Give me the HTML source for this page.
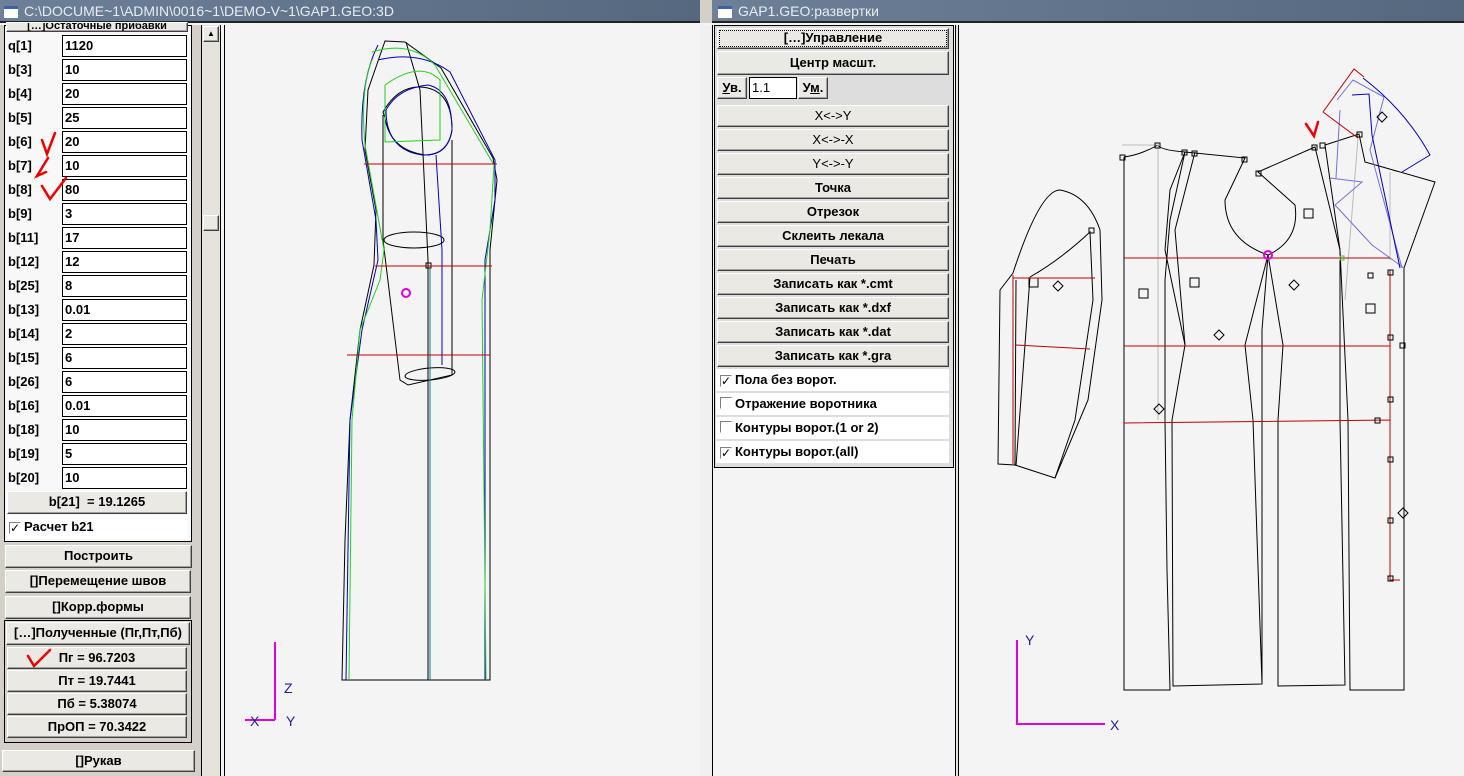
<!DOCTYPE html>
<html><head><meta charset="utf-8"><style>
*{margin:0;padding:0;box-sizing:border-box}
body{width:1464px;height:776px;overflow:hidden;background:#f4f4f4;position:relative;font-family:"Liberation Sans","DejaVu Sans",sans-serif;font-weight:bold;font-size:13px;color:#000}
.a{position:absolute}
.title{position:absolute;top:0;height:23px;background:linear-gradient(90deg,#6d8098,#56687e);color:#e8ecf2;font-weight:normal;font-size:14px;line-height:23px;border-bottom:2px solid #222}
.ico{position:absolute;top:6px;width:14px;height:12px;background:#fff;border-top:3px solid #3a63a8}
.btn{position:absolute;background:#ebe9e4;border:1px solid;border-color:#fff #404040 #404040 #fff;box-shadow:inset -1px -1px 0 #a0a0a0;text-align:center;line-height:20px;white-space:nowrap}
.in{position:absolute;left:62px;width:125px;height:22px;background:#fff;border:1px solid #000;line-height:20px;padding-left:2px}
.lb{position:absolute;left:8px;line-height:18px}
.cb{position:absolute;left:716px;width:233px;height:23px;background:#fff;border-bottom:1px solid #ddd;line-height:22px;padding-left:4px}
.box{display:inline-block;width:12px;height:12px;border:1px solid;border-color:#808080 #fff #fff #808080;vertical-align:-1px;margin-right:3px;font-size:12px;line-height:10px;text-align:center}
</style></head><body>
<div class="title" style="left:0;width:705px"><div class="ico" style="left:4px"></div><span style="position:absolute;left:24px">C:\DOCUME~1\ADMIN\0016~1\DEMO-V~1\GAP1.GEO:3D</span></div>
<div class="a" style="left:700px;top:0;width:12px;height:23px;background:#d4d0c8"></div>
<div class="title" style="left:712px;width:752px"><div class="ico" style="left:6px"></div><span style="position:absolute;left:26px">GAP1.GEO:развертки</span></div>

<div class="a" style="left:0;top:25px;width:201px;height:751px;background:#d4d0c8"></div>
<div class="a" style="left:4px;top:25px;width:188px;height:517px;border:1px solid #000;background:#f8f8f8"></div>
<div class="btn" style="left:6px;top:22px;width:182px;height:10px;line-height:6px;font-size:11px;overflow:hidden">[…]Остаточные прибавки</div>
<div class="lb" style="top:37px">q[1]</div><div class="in" style="top:35px">1120</div>
<div class="lb" style="top:61px">b[3]</div><div class="in" style="top:59px">10</div>
<div class="lb" style="top:85px">b[4]</div><div class="in" style="top:83px">20</div>
<div class="lb" style="top:109px">b[5]</div><div class="in" style="top:107px">25</div>
<div class="lb" style="top:133px">b[6]</div><div class="in" style="top:131px">20</div>
<div class="lb" style="top:157px">b[7]</div><div class="in" style="top:155px">10</div>
<div class="lb" style="top:181px">b[8]</div><div class="in" style="top:179px">80</div>
<div class="lb" style="top:205px">b[9]</div><div class="in" style="top:203px">3</div>
<div class="lb" style="top:229px">b[11]</div><div class="in" style="top:227px">17</div>
<div class="lb" style="top:253px">b[12]</div><div class="in" style="top:251px">12</div>
<div class="lb" style="top:277px">b[25]</div><div class="in" style="top:275px">8</div>
<div class="lb" style="top:301px">b[13]</div><div class="in" style="top:299px">0.01</div>
<div class="lb" style="top:325px">b[14]</div><div class="in" style="top:323px">2</div>
<div class="lb" style="top:349px">b[15]</div><div class="in" style="top:347px">6</div>
<div class="lb" style="top:373px">b[26]</div><div class="in" style="top:371px">6</div>
<div class="lb" style="top:397px">b[16]</div><div class="in" style="top:395px">0.01</div>
<div class="lb" style="top:421px">b[18]</div><div class="in" style="top:419px">10</div>
<div class="lb" style="top:445px">b[19]</div><div class="in" style="top:443px">5</div>
<div class="lb" style="top:469px">b[20]</div><div class="in" style="top:467px">10</div>
<div class="btn" style="left:7px;top:491px;width:180px;height:23px">b[21]&nbsp; = 19.1265</div>
<div class="a" style="left:7px;top:516px;width:180px;height:23px;background:#fff;line-height:22px;padding-left:2px"><span class="box">✓</span>Расчет b21</div>
<div class="btn" style="left:5px;top:545px;width:187px;height:23px">Построить</div>
<div class="btn" style="left:5px;top:570px;width:186px;height:23px">[]Перемещение швов</div>
<div class="btn" style="left:5px;top:596px;width:186px;height:23px">[]Корр.формы</div>
<div class="a" style="left:4px;top:620px;width:188px;height:123px;border:1px solid #000"></div>
<div class="btn" style="left:6px;top:622px;width:184px;height:23px">[…]Полученные (Пг,Пт,Пб)</div>
<div class="btn" style="left:7px;top:647px;width:180px;height:22px">Пг = 96.7203</div>
<div class="btn" style="left:7px;top:670px;width:180px;height:22px">Пт = 19.7441</div>
<div class="btn" style="left:7px;top:693px;width:180px;height:22px">Пб = 5.38074</div>
<div class="btn" style="left:7px;top:716px;width:180px;height:22px">ПрОП = 70.3422</div>
<div class="btn" style="left:2px;top:750px;width:193px;height:22px">[]Рукав</div>

<div class="a" style="left:201px;top:25px;width:1px;height:751px;background:#000"></div>
<div class="a" style="left:202px;top:25px;width:18px;height:751px;background:#e6e3dc"></div>
<div class="btn" style="left:203px;top:26px;width:16px;height:16px;line-height:14px;font-size:8px">▲</div>
<div class="btn" style="left:203px;top:215px;width:16px;height:16px"></div>
<div class="a" style="left:220px;top:25px;width:1px;height:751px;background:#000"></div>
<div class="a" style="left:224px;top:25px;width:1px;height:751px;background:#000"></div>

<div class="a" style="left:700px;top:25px;width:12px;height:751px;background:#f0f0f0"></div>
<div class="a" style="left:712px;top:25px;width:1px;height:751px;background:#000"></div>
<div class="a" style="left:955px;top:25px;width:4px;height:751px;background:#e6e3dc;border-left:1px solid #000;border-right:1px solid #000"></div>
<div class="a" style="left:714px;top:25px;width:240px;height:443px;border:1px solid #000;background:#ddd"></div>
<div class="btn" style="left:717px;top:28px;width:232px;height:21px;line-height:18px;outline:1px dotted #000;outline-offset:-3px">[…]Управление</div>
<div class="btn" style="left:717px;top:51px;width:232px;height:24px;line-height:22px">Центр масшт.</div>
<div class="btn" style="left:717px;top:77px;width:30px;height:22px"><u>У</u>в.</div>
<div class="a" style="left:749px;top:77px;width:48px;height:22px;background:#fff;border:1px solid #000;font-weight:normal;line-height:20px;padding-left:2px">1.1</div>
<div class="btn" style="left:798px;top:77px;width:30px;height:22px">У<u>м</u>.</div>
<div class="btn" style="left:717px;top:105px;width:232px;height:22px;font-weight:normal">X&lt;-&gt;Y</div>
<div class="btn" style="left:717px;top:129px;width:232px;height:22px;font-weight:normal">X&lt;-&gt;-X</div>
<div class="btn" style="left:717px;top:153px;width:232px;height:22px;font-weight:normal">Y&lt;-&gt;-Y</div>
<div class="btn" style="left:717px;top:177px;width:232px;height:22px">Точка</div>
<div class="btn" style="left:717px;top:201px;width:232px;height:22px">Отрезок</div>
<div class="btn" style="left:717px;top:225px;width:232px;height:22px">Склеить лекала</div>
<div class="btn" style="left:717px;top:249px;width:232px;height:22px">Печать</div>
<div class="btn" style="left:717px;top:273px;width:232px;height:22px">Записать как *.cmt</div>
<div class="btn" style="left:717px;top:297px;width:232px;height:22px">Записать как *.dxf</div>
<div class="btn" style="left:717px;top:321px;width:232px;height:22px">Записать как *.dat</div>
<div class="btn" style="left:717px;top:345px;width:232px;height:22px">Записать как *.gra</div>
<div class="cb" style="top:369px"><span class="box">✓</span>Пола без ворот.</div>
<div class="cb" style="top:393px"><span class="box"></span>Отражение воротника</div>
<div class="cb" style="top:417px"><span class="box"></span>Контуры ворот.(1 or 2)</div>
<div class="cb" style="top:441px"><span class="box">✓</span>Контуры ворот.(all)</div>

<svg class="a" style="left:0;top:0" width="1464" height="776" viewBox="0 0 1464 776" fill="none" stroke-width="1">
<g stroke="#e00" stroke-width="2.5" stroke-linecap="round">
<path d="M42 140 L47 154 L55 133"/><path d="M48 158 L37 176 L46 172"/><path d="M42 186 L50 199 L66 178"/>
<path d="M28 656 L34 666 L50 650"/><path d="M1306 124 L1314 136 L1318 122"/>
</g>
<g stroke="#000">
<path d="M385 41 L405 42 L441 68 L493 158 L497 180 L490 250 L490 680 L342 680 L345 540 L350 420 L360 330 L374 265 L376 210 L365 150 L368 90 Z"/>
<path d="M406 42 L420 90 L428 260 L428 680"/>
<path d="M383 112 Q400 82 428 88 Q452 94 452 130 Q448 155 425 155 Q390 150 385 118 Z"/>
<path d="M383 115 L383 240 L400 380 L408 385 L452 375 L452 140"/>
<ellipse cx="414" cy="240" rx="30" ry="8"/>
<ellipse cx="430" cy="374" rx="25" ry="6" transform="rotate(-5 430 374)"/>
<rect x="426" y="263" width="5" height="5"/>
</g>
<g stroke="#0000c0">
<path d="M378 45 Q360 80 362 140 L376 220 L378 260 L362 330 L350 420 L346 680"/>
<path d="M378 60 Q420 50 450 72 L495 160 L495 200 L485 260 L485 680"/>
<path d="M386 110 Q398 88 428 85 Q452 90 452 130 Q448 156 422 155 Q386 150 386 110"/>
<path d="M436 155 L442 250 L442 365"/>
</g>
<g stroke="#1fd21f">
<path d="M372 52 Q410 40 435 65 L494 165 L490 230 L482 300 L486 680"/>
<path d="M372 60 Q360 90 365 145 L384 250 L380 280 L360 330 L352 420 L349 680"/>
<path d="M385 85 Q420 60 440 80 L440 140 L385 142 Z"/>
</g>
<path d="M430 268 L430 680" stroke="#008080"/>
<g stroke="#c00000"><path d="M364 164 H497 M375 266 H492 M347 355 H490"/></g>
<circle cx="406" cy="293" r="4" stroke="#e000e0" stroke-width="2"/>
<g stroke="#e000e0" stroke-width="2"><path d="M275 642 V720 M245 720 H275"/></g>
<g fill="#2020a0" stroke="none" font-family="Liberation Sans" font-size="14" font-weight="normal"><text x="284" y="693">Z</text><text x="286" y="726">Y</text><text x="250" y="726">X</text><text x="1025" y="645">Y</text><text x="1110" y="730">X</text></g>
<g stroke="#e000e0" stroke-width="2"><path d="M1017 640 V724 H1105"/></g>

<g stroke="#000">
<path d="M1013 273 Q1040 190 1060 190 Q1088 195 1100 230 L1102 300 L1088 400 L1055 478 L1015 465 L998 464 L1000 290 Z"/>
<path d="M1030 277 Q1060 260 1090 232 L1093 300 L1075 420 L1055 478"/>
<path d="M1016 280 L1015 465 M1030 277 L1016 466"/>
<rect x="1029" y="278" width="9" height="9"/><rect x="1089" y="228" width="5" height="5"/>
</g>
<g stroke="#c00000"><path d="M1013 275 L1013 464 M1013 278 H1095 M1015 345 L1090 349"/></g>
<g stroke="#000">
<path d="M1124 157 L1124 690 L1170 690 L1167 570 L1165 420 L1165 280 L1170 220 L1185 152 Q1160 150 1158 145 Q1140 155 1124 157"/>
<path d="M1185 152 L1245 158 L1225 200 Q1225 240 1268 255 L1262 330 L1262 684 L1173 686 L1172 420 L1185 345 L1165 250 L1170 190 Z"/>
<path d="M1195 152 L1175 230 L1185 345"/>
<path d="M1258 172 L1315 147 L1340 250 L1340 420 L1345 685 L1278 686 L1278 420 L1283 345 L1268 255 Q1300 240 1295 205 Z"/>
<path d="M1325 145 L1359 134 L1365 162 L1435 182 L1404 268 L1404 690 L1350 690 L1348 420 L1340 250 Z"/>
<path d="M1268 255 L1245 345 L1253 420 L1262 684"/>
</g>
<g stroke="#bbb"><path d="M1122 145 H1158 L1158 420 M1358 138 L1345 300 M1390 172 V260"/></g>
<g stroke="#7070e0"><path d="M1337 100 L1353 80 L1384 97 L1370 150 L1402 268 M1330 178 L1362 182 L1335 205 L1372 245 L1404 268 M1340 110 L1336 178"/></g>
<g stroke="#0000c0"><path d="M1363 78 Q1405 110 1430 155 L1402 172 M1352 95 L1369 94 L1372 135 L1400 268"/></g>
<g stroke="#c00000"><path d="M1323 112 L1354 69 L1364 77 M1323 112 L1358 138 M1124 258 H1390 M1124 346 L1390 346 M1124 423 L1390 420 M1390 270 V580 H1400"/></g>
<circle cx="1268" cy="255" r="4" stroke="#e000e0" stroke-width="2"/>
<rect x="1340" y="256" width="4" height="4" stroke="#3c3"/>
<g stroke="#000">
<rect x="1120" y="155" width="5" height="5"/><rect x="1155" y="143" width="5" height="5"/><rect x="1182" y="150" width="5" height="5"/><rect x="1192" y="151" width="5" height="5"/><rect x="1242" y="157" width="5" height="5"/><rect x="1256" y="171" width="5" height="5"/><rect x="1312" y="145" width="5" height="5"/><rect x="1320" y="143" width="5" height="5"/><rect x="1357" y="132" width="5" height="5"/>
<rect x="1304" y="209" width="9" height="9"/><rect x="1139" y="289" width="9" height="9"/><rect x="1190" y="278" width="9" height="9"/><rect x="1366" y="304" width="9" height="9"/>
<rect x="1368" y="273" width="5" height="5"/><rect x="1388" y="270" width="5" height="5"/><rect x="1388" y="335" width="5" height="5"/><rect x="1400" y="343" width="5" height="5"/><rect x="1388" y="397" width="5" height="5"/><rect x="1375" y="418" width="5" height="5"/><rect x="1388" y="457" width="5" height="5"/><rect x="1388" y="518" width="5" height="5"/><rect x="1388" y="576" width="5" height="5"/>
<path d="M1294 280 l5 5 l-5 5 l-5 -5 z M1219 330 l5 5 l-5 5 l-5 -5 z M1159 404 l5 5 l-5 5 l-5 -5 z M1058 281 l5 5 l-5 5 l-5 -5 z M1403 508 l5 5 l-5 5 l-5 -5 z M1382 112 l5 5 l-5 5 l-5 -5 z"/>
</g>
</svg>
</body></html>
